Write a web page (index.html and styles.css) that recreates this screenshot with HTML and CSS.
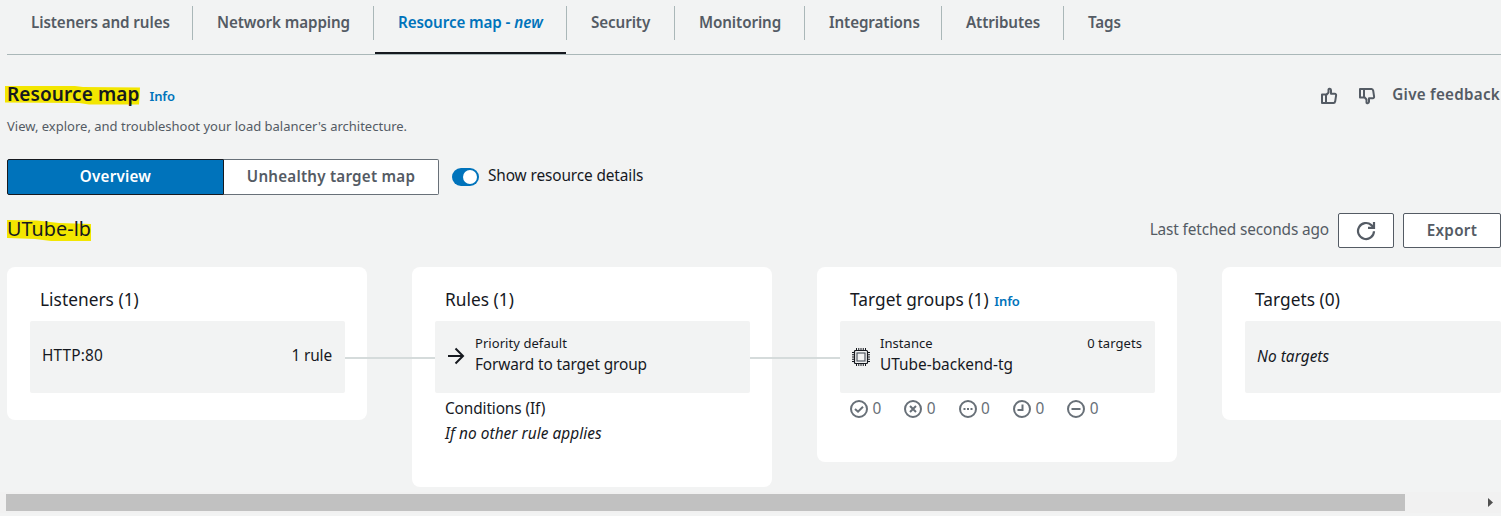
FILE: index.html
```html
<!DOCTYPE html>
<html lang="en">
<head>
<meta charset="utf-8">
<title>Resource map</title>
<link rel="stylesheet" href="styles.css">
</head>
<body>
<nav class="tabs">
  <a class="tab tab-1">Listeners and rules</a>
  <a class="tab tab-2">Network mapping</a>
  <a class="tab tab-3 active">Resource map - <i>new</i></a>
  <a class="tab tab-4">Security</a>
  <a class="tab tab-5">Monitoring</a>
  <a class="tab tab-6">Integrations</a>
  <a class="tab tab-7">Attributes</a>
  <a class="tab tab-8">Tags</a>
</nav>

<header class="head">
  <h1 class="title">
    <svg class="marker" width="136" height="22" viewBox="0 0 136 22"><path d="M0 2 L70 2 L78 3 L135 3.5 L134 20.5 L84 20.5 L74 19 L0 18.5Z" fill="#f3e600"/></svg>
    <span class="over">Resource map</span>
  </h1>
  <a class="info">Info</a>
  <div class="feedback">
    <svg width="18" height="18" viewBox="0 0 18 18" fill="none" stroke="#545b64" stroke-width="2" stroke-linejoin="round"><path d="M2 7.500h4v8.500H2zM6 8.200L8.500 5.500V2.600c0-1.200 2.500-1 2.500.6v3.600h3.800c1 0 1.400.7 1.300 1.500l-.9 6c-.2 1-.7 1.700-1.600 1.700H6z"/></svg>
    <svg class="down" width="18" height="18" viewBox="0 0 18 18" fill="none" stroke="#545b64" stroke-width="2" stroke-linejoin="round"><path d="M2 2h4v8.500H2zM6 9.800l2.500 2.700v2.900c0 1.200 2.500 1 2.500-.6v-3.600h3.800c1 0 1.400-.7 1.300-1.500l-.9-6C15 2.700 14.500 2 13.600 2H6z"/></svg>
    <a class="give">Give feedback</a>
  </div>
</header>
<p class="desc">View, explore, and troubleshoot your load balancer's architecture.</p>

<div class="controls">
  <button class="seg seg-on">Overview</button><button class="seg seg-off">Unhealthy target map</button>
  <span class="toggle"><span class="knob"></span></span>
  <span class="toggle-label">Show resource details</span>
</div>

<div class="toolbar">
  <h2 class="lb">
    <svg class="marker-lb" width="84" height="22" viewBox="0 0 84 22"><path d="M0 1 L30 1.5 L52 4 L84 5 L84 22 L44 22 L28 20 L0 19Z" fill="#f3e600"/></svg>
    <span class="over">UTube-lb</span>
  </h2>
  <span class="fetched">Last fetched seconds ago</span>
  <button class="btn refresh"><svg width="20" height="20" viewBox="0 0 20 20" fill="none" stroke="#545b64" stroke-width="2.2"><path d="M18 10.2a8 8 0 1 1-2.6-6.1L17 6"/><path d="M18 1v5.8h-6"/></svg></button>
  <button class="btn export">Export</button>
</div>

<main class="map">
  <section class="card card-short">
    <h3 class="card-title">Listeners (1)</h3>
    <div class="item linked single"><span class="wide">HTTP:80</span><span class="count">1 rule</span></div>
  </section>
  <section class="card card-rules">
    <h3 class="card-title">Rules (1)</h3>
    <div class="item linked">
      <svg class="arrow" width="18" height="18" viewBox="0 0 18 18" fill="none" stroke="#16191f" stroke-width="2"><path d="M1 9h15M8.5 1.5L16 9l-7.500 7.500"/></svg>
      <div class="lines"><span class="small">Priority default</span><span>Forward to target group</span></div>
    </div>
    <div class="conditions"><span>Conditions (If)</span><i>If no other rule applies</i></div>
  </section>
  <section class="card card-groups">
    <h3 class="card-title">Target groups (1) <a class="info">Info</a></h3>
    <div class="item">
      <svg class="chip" width="18" height="18" viewBox="0 0 18 18" fill="none" stroke="#16191f"><rect x="2.500" y="2.500" width="13" height="13" rx="1" stroke-width="1.200"/><rect x="5" y="5" width="8" height="8" stroke-width="1.200" stroke="#545b64"/><path d="M4.500 0v2M6.750 0v2M9 0v2M11.250 0v2M13.500 0v2M4.500 16v2M6.750 16v2M9 16v2M11.250 16v2M13.500 16v2M0 4.500h2M0 6.750h2M0 9h2M0 11.250h2M0 13.500h2M16 4.500h2M16 6.750h2M16 9h2M16 11.250h2M16 13.500h2" stroke-width="1"/></svg>
      <div class="lines"><span class="small">Instance</span><span class="group-name">UTube-backend-tg</span></div>
      <span class="small targets">0 targets</span>
    </div>
    <div class="statuses">
      <span class="status"><svg viewBox="0 0 18 18"><circle cx="9" cy="9" r="8"/><path d="M5 9l3 2.700 5-5"/></svg><span class="num">0</span></span>
      <span class="status"><svg viewBox="0 0 18 18"><circle cx="9" cy="9" r="8"/><path d="M6 6l6 6M12 6l-6 6"/></svg><span class="num">0</span></span>
      <span class="status"><svg viewBox="0 0 18 18"><circle cx="9" cy="9" r="8"/><path d="M4.500 9h2M8 9h2M11.500 9h2"/></svg><span class="num">0</span></span>
      <span class="status"><svg viewBox="0 0 18 18"><circle cx="9" cy="9" r="8"/><path d="M9.500 4.500v5.500H4.500"/></svg><span class="num">0</span></span>
      <span class="status"><svg viewBox="0 0 18 18"><circle cx="9" cy="9" r="8"/><path d="M4.500 9h9"/></svg><span class="num">0</span></span>
    </div>
  </section>
  <section class="card card-short card-targets">
    <h3 class="card-title">Targets (0)</h3>
    <div class="item none"><i>No targets</i></div>
  </section>
</main>

<div class="scrollbar"><div class="thumb"></div><svg class="scroll-arrow" width="5" height="9" viewBox="0 0 5 9"><path d="M0 0L5 4.500L0 9z" fill="#505050"/></svg></div>
</body>
</html>
```
FILE: styles.css
```css
* { box-sizing: border-box; }
body {
  margin: 0;
  padding-left: 7px;
  height: 516px;
  overflow: hidden;
  background: #f2f3f3;
  color: #16191f;
  font: 15.4px/22px "Noto Sans", sans-serif;
  letter-spacing: -0.12px;
}
h1, h2, h3, p { margin: 0; font-weight: 400; }
button { font: inherit; padding: 0; }

.tabs {
  display: flex;
  height: 55px;
  padding-top: 6px;
  border-bottom: 1px solid #aab7b8;
  color: #545b64;
  font-size: 15.2px;
  font-weight: 600;
  letter-spacing: -0.1px;
}
.tab {
  position: relative;
  height: 34px;
  padding: 5px 0 0 24px;
  border-right: 1px solid #aab7b8;
  white-space: nowrap;
}
.tab-1 { width: 186px; }
.tab-2 { width: 181px; }
.tab-3 { width: 193px; }
.tab-4 { width: 108px; }
.tab-5 { width: 130px; }
.tab-6 { width: 137px; }
.tab-7 { width: 122px; }
.tab-8 { border-right: 0; }
.active { color: #0073bb; }
.active::after {
  content: "";
  position: absolute;
  left: 1px;
  right: 0;
  top: 46px;
  height: 2px;
  background: #16191f;
}

.head { display: flex; align-items: baseline; height: 53px; padding-top: 28px; }
.title { position: relative; font-size: 19px; font-weight: 600; letter-spacing: 0.1px; }
.over { position: relative; }
.marker { position: absolute; left: -2px; top: 1px; }
.info { color: #0073bb; font-size: 13px; font-weight: 600; letter-spacing: -0.1px; }
.head .info { margin-left: 10px; }
.card-title .info { margin-left: 1px; }
.feedback { display: flex; align-items: center; align-self: flex-start; margin-left: auto; color: #545b64; }
.feedback svg { margin-top: 3px; }
.down { margin-left: 20px; }
.give { margin: 0 1px 0 16px; font-size: 15.2px; font-weight: 600; letter-spacing: 0.26px; line-height: 23px; white-space: nowrap; }
.desc { height: 51px; padding-top: 7px; color: #545b64; font-size: 13px; letter-spacing: 0; }

.controls { display: flex; height: 54px; }
.seg { height: 36px; padding-bottom: 3px; font-size: 15.2px; font-weight: 600; letter-spacing: 0.22px; }
.seg-on { width: 217px; border: 1px solid #16191f; border-radius: 2px 0 0 2px; background: #0073bb; color: #fff; }
.seg-off { width: 215px; border: 1px solid #687078; border-left: 0; border-radius: 0 2px 2px 0; background: #fff; color: #545b64; }
.toggle { width: 27px; height: 18px; margin: 9px 9px 0 13px; padding: 2px 2px 2px 11px; border-radius: 9px; background: #0073bb; }
.knob { display: block; width: 14px; height: 14px; border-radius: 50%; background: #fff; }
.toggle-label { padding-top: 6px; }

.toolbar { display: flex; height: 54px; color: #545b64; }
.lb { position: relative; margin-right: auto; padding-top: 5px; color: #16191f; font-size: 19.8px; letter-spacing: 0.05px; }
.marker-lb { position: absolute; left: 0; top: 6px; }
.fetched { padding-top: 6px; letter-spacing: -0.14px; }
.btn { height: 35px; border: 1px solid #545b64; border-radius: 2px; background: #fff; color: #545b64; }
.refresh { display: grid; place-items: center; width: 56px; margin: 0 9px; }
.export { width: 98px; padding-bottom: 2px; font-size: 15.2px; font-weight: 600; letter-spacing: 0.3px; }

.map { display: flex; align-items: flex-start; gap: 45px; height: 225px; }
.card { flex: none; width: 360px; padding: 22px 22px 0 23px; border-radius: 8px; background: #fff; }
.card-short { height: 153px; }
.card-rules { height: 220px; }
.card-groups { height: 195px; }
.card-targets { width: 279px; padding-right: 0; border-radius: 8px 0 0 8px; }
.card-title { height: 32px; padding-left: 10px; font-size: 17.3px; letter-spacing: 0.03px; }
.item { position: relative; display: flex; height: 72px; padding: 12px 13px 0 12px; border-radius: 2px; background: #f2f3f3; }
.linked::after {
  content: "";
  position: absolute;
  left: 315px;
  top: 36px;
  width: 90px;
  height: 2px;
  background: #d5dbdb;
}
.single { padding-top: 24px; }
.none { padding-top: 25px; }
.wide { letter-spacing: 0.15px; }
.count { margin-left: auto; }
.arrow { margin: 14px 10px 0 0; }
.chip { margin: 15px 10px 0 0; }
.lines { display: flex; flex-direction: column; line-height: 21px; }
.group-name { letter-spacing: 0; }
.small { font-size: 13px; line-height: 21px; letter-spacing: 0.06px; }
.targets { margin-left: auto; }
.conditions { display: flex; flex-direction: column; gap: 3px; padding: 5px 10px; }
i { letter-spacing: 0.05px; }
.statuses { display: flex; gap: 22.3px; padding: 5px 10px; color: #687078; }
.status { display: flex; align-items: center; gap: 4.5px; width: 32px; }
.status svg { width: 18px; height: 18px; fill: none; stroke: #687078; stroke-width: 2; }
.num { line-height: 22px; }

.scrollbar { display: flex; align-items: center; height: 21px; margin-left: -7px; padding-left: 6px; background: #f1f1f1; }
.thumb { width: 1399px; height: 17px; background: #c1c1c1; }
.scroll-arrow { margin-left: 83px; }
```
